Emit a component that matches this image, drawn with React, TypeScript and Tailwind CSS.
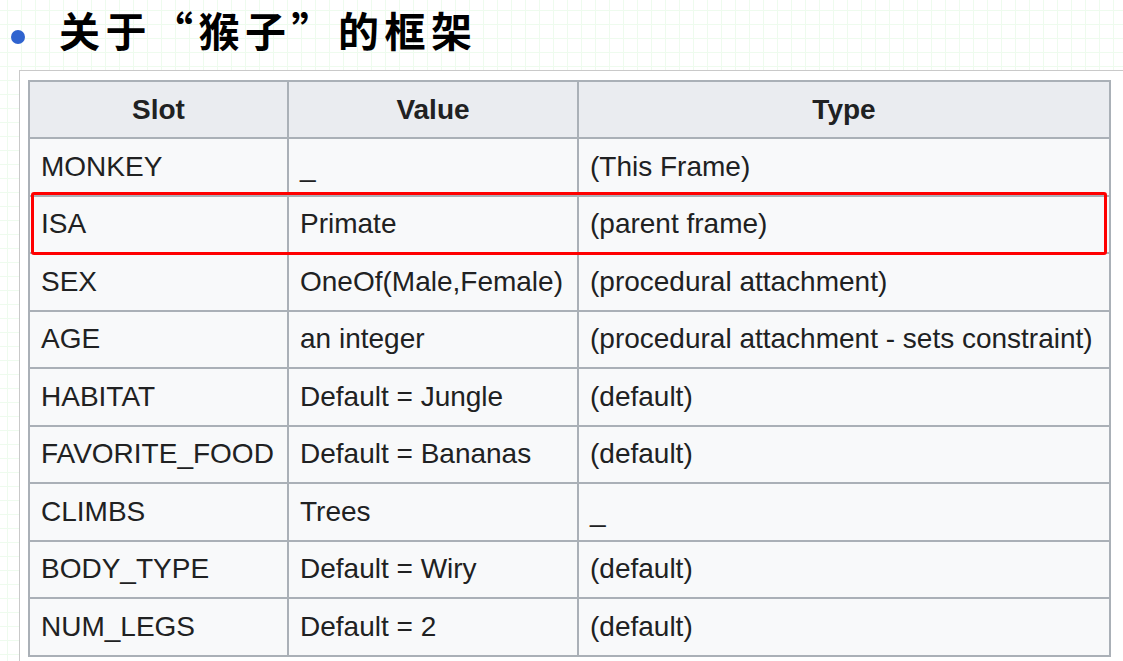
const rows: [string, string, string][] = [
  ['MONKEY', '_', '(This Frame)'],
  ['ISA', 'Primate', '(parent frame)'],
  ['SEX', 'OneOf(Male,Female)', '(procedural attachment)'],
  ['AGE', 'an integer', '(procedural attachment - sets constraint)'],
  ['HABITAT', 'Default = Jungle', '(default)'],
  ['FAVORITE_FOOD', 'Default = Bananas', '(default)'],
  ['CLIMBS', 'Trees', '_'],
  ['BODY_TYPE', 'Default = Wiry', '(default)'],
  ['NUM_LEGS', 'Default = 2', '(default)'],
];

export default function App() {
  return (
    <div className="w-[1123px] h-[661px] overflow-hidden bg-white bg-[image:linear-gradient(to_right,#eefbee_1px,transparent_1px),linear-gradient(to_bottom,#eefbee_1px,transparent_1px)] bg-[size:14px_14px] bg-[position:7px_10px] flex flex-col">
      {/* Title */}
      <div className="h-[70px] flex items-center shrink-0">
        <span className="ml-[11px] mt-[4px] w-[14px] h-[14px] rounded-full bg-[#2f63cf]" />
        <h1 className="ml-[34px] mb-[11px] text-[41px] leading-none font-bold tracking-[5.5px] text-black font-['Noto_Sans_CJK_SC',sans-serif]">
          关于“猴子”的框架
        </h1>
      </div>

      {/* Panel */}
      <div className="relative flex-1 ml-[19px] bg-white border-t border-l border-[#c9c9c9] pl-[8px] pt-[9px]">
        <div className="w-[1083px] grid grid-cols-[257px_288px_530px] auto-rows-[55.5px] grid-rows-[55px] gap-[2px] p-[2px] bg-[#aab0b7] text-[#202122] text-[28px] font-['Liberation_Sans',Arial,sans-serif]">
          {['Slot', 'Value', 'Type'].map((h) => (
            <div key={h} className="bg-[#eaecf0] font-bold flex items-center justify-center">
              {h}
            </div>
          ))}
          {rows.map((r) =>
            r.map((c, i) => (
              <div key={r[0] + i} className="bg-[#f8f9fa] flex items-center px-[11px] whitespace-nowrap">
                {c}
              </div>
            ))
          )}
        </div>

        {/* highlight */}
        <div className="absolute left-[11px] top-[121px] w-[1076px] h-[63px] border-[3px] border-[#ff0000] rounded-[3px]" />
      </div>
    </div>
  );
}
